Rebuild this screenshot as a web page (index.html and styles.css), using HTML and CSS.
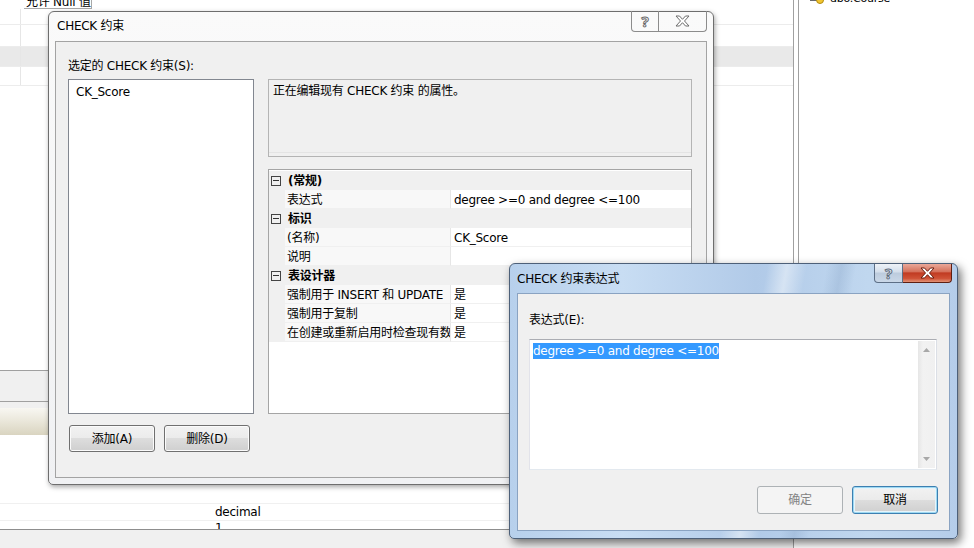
FILE: index.html
```html
<!DOCTYPE html>
<html lang="zh-CN">
<head>
<meta charset="utf-8">
<title>CHECK 约束</title>
<link rel="stylesheet" href="styles.css">
</head>
<body>
<div class="desktop">
  <div class="app">
    <div class="app-main">
      <div class="tbl-head"><span class="tbl-head-cell">允许 Null 值</span></div>
      <div class="tbl-row r1"><span class="tbl-key"></span></div>
      <div class="tbl-row r2"><span class="tbl-key"></span></div>
      <div class="tbl-row r3 sel"><span class="tbl-key"></span></div>
      <div class="tbl-row r4"><span class="tbl-key"></span></div>
      <div class="app-fill"></div>
      <div class="app-tabs"></div>
      <div class="app-toolbar"></div>
      <div class="app-props">
        <div class="prop-line">decimal</div>
        <div class="prop-line cut">1</div>
      </div>
      <div class="app-status"></div>
    </div>
    <div class="app-side">
      <div class="side-inner">
        <div class="side-item">
          <svg class="side-icon" width="14" height="12" viewBox="0 0 14 12"><rect x="0.5" y="0.5" width="9" height="8" fill="#fff" stroke="#6b6b6b"/><circle cx="10" cy="8" r="3.5" fill="#f2c531" stroke="#b08a10"/></svg>
          <span class="side-text">dbo.Course</span>
        </div>
      </div>
    </div>
  </div>

  <div class="win dlg-main">
    <div class="win-title">
      <span class="win-caption">CHECK 约束</span>
      <div class="cap-btns">
        <span class="cap-btn cap-help"><span class="q">?</span></span>
        <span class="cap-btn cap-close"><svg width="15" height="12" viewBox="0 0 15 12"><polygon points="1,1 4.5,1 7.5,4.3 10.5,1 14,1 9.5,6 14,11 10.5,11 7.5,7.7 4.5,11 1,11 5.5,6" fill="#fff" stroke="#6d6d6d" stroke-width="1"/></svg></span>
      </div>
    </div>
    <div class="win-client main-client">
      <div class="list-label">选定的 CHECK 约束(S):</div>
      <div class="listbox"><div class="list-item">CK_Score</div></div>
      <div class="right-col">
        <div class="desc">正在编辑现有 CHECK 约束 的属性。</div>
        <div class="pgrid">
          <div class="pg-cat"><span class="pg-box"></span><b>(常规)</b></div>
          <div class="pg-row"><span class="pg-name">表达式</span><span class="pg-val">degree &gt;=0 and degree &lt;=100</span></div>
          <div class="pg-cat"><span class="pg-box"></span><b>标识</b></div>
          <div class="pg-row"><span class="pg-name">(名称)</span><span class="pg-val">CK_Score</span></div>
          <div class="pg-row"><span class="pg-name">说明</span><span class="pg-val"></span></div>
          <div class="pg-cat"><span class="pg-box"></span><b>表设计器</b></div>
          <div class="pg-row"><span class="pg-name">强制用于 INSERT 和 UPDATE</span><span class="pg-val">是</span></div>
          <div class="pg-row"><span class="pg-name">强制用于复制</span><span class="pg-val">是</span></div>
          <div class="pg-row"><span class="pg-name">在创建或重新启用时检查现有数据</span><span class="pg-val">是</span></div>
        </div>
      </div>
      <div class="btn-row">
        <button class="btn">添加(A)</button>
        <button class="btn">删除(D)</button>
      </div>
    </div>
  </div>

  <div class="win dlg-expr">
    <div class="win-title">
      <span class="win-caption">CHECK 约束表达式</span>
      <div class="cap-btns">
        <span class="cap-btn cap-help"><span class="q">?</span></span>
        <span class="cap-btn cap-close"><svg width="15" height="12" viewBox="0 0 15 12"><polygon points="1,1 4.5,1 7.5,4.3 10.5,1 14,1 9.5,6 14,11 10.5,11 7.5,7.7 4.5,11 1,11 5.5,6" fill="#fff" stroke="#6a1c0e" stroke-width="1"/></svg></span>
      </div>
    </div>
    <div class="win-client expr-client">
      <div class="expr-label">表达式(E):</div>
      <div class="expr-box">
        <div class="expr-text"><span class="sel-text">degree &gt;=0 and degree &lt;=100</span></div>
        <div class="scroll">
          <svg width="7" height="4" viewBox="0 0 7 4"><polygon points="0,4 3.5,0 7,4" fill="#a8a8a8"/></svg>
          <svg width="7" height="4" viewBox="0 0 7 4"><polygon points="0,0 3.5,4 7,0" fill="#a8a8a8"/></svg>
        </div>
      </div>
      <div class="expr-btns">
        <button class="btn btn-disabled">确定</button>
        <button class="btn btn-focus">取消</button>
      </div>
    </div>
  </div>
</div>
</body>
</html>
```

FILE: styles.css
```css
* { box-sizing: border-box; margin: 0; padding: 0; }
html, body { width: 974px; height: 548px; overflow: hidden; }
body {
  background: #fff;
  font-family: "DejaVu Sans", "Noto Sans CJK SC", sans-serif;
  font-size: 12px;
  letter-spacing: -0.25px;
  color: #000;
  line-height: 15px;
}
.desktop { position: relative; width: 974px; height: 548px; overflow: hidden; }

/* background application */
.app { display: flex; height: 548px; }
.app-main { width: 794px; border-right: 1px solid #a0a0a0; display: flex; flex-direction: column; }
.tbl-head { height: 9px; overflow: hidden; display: flex; flex: none; align-items: flex-end; }
.tbl-head-cell {
  margin-left: 24px; width: 68px; height: 9px;
  border-right: 1px solid #a8a8a8; border-bottom: 1px solid #a8a8a8;
  line-height: 12px; padding-left: 2px;
  display: flex; align-items: flex-end; padding-bottom: 0;
}
.tbl-row { display: flex; flex: none; border-bottom: 1px solid #ececec; }
.tbl-row.r1 { height: 16px; }
.tbl-row.r2 { height: 22px; }
.tbl-row.r3 { height: 20px; }
.tbl-row.r4 { height: 19px; }
.tbl-row.sel { background: #e9e9e9; }
.tbl-key { width: 21px; border-right: 1px solid #e6e6e6; }
.app-fill { height: 284px; flex: none; }
.app-tabs { height: 32px; flex: none; border-top: 1px solid #a0a0a0; border-bottom: 1px solid #a0a0a0; background: #f0f0f0; }
.app-toolbar {
  height: 33px; flex: none;
  background: linear-gradient(#f0f0f0 0, #f0f0f0 6px, #f8f7f2 6px, #ebe8dc 55%, #d9d4c0 100%);
}
.app-props { height: 94px; flex: none; padding-top: 68px; }
.prop-line { height: 17px; border-top: 1px solid #f0f0f0; padding-left: 215px; line-height: 16px; overflow: hidden; }
.prop-line.cut { height: 9px; line-height: 14px; }
.app-status { flex: 1; border-top: 1px solid #8e8e8e; background: #f0f0f0; }

.app-side { flex: 1; padding-left: 4px; }
.side-inner { height: 100%; border-left: 1px solid #a0a0a0; }
.side-item { display: flex; align-items: center; gap: 6px; height: 14px; margin-top: -9px; padding-left: 11px; }
.side-text { font-size: 11px; }

/* windows */
.win { position: absolute; display: flex; flex-direction: column; border: 1px solid; border-radius: 6px 6px 5px 5px; }
.win-title { height: 29px; flex: none; display: flex; align-items: center; position: relative; }
.win-client { flex: 1; border: 1px solid; background: #f0f0f0; }

.dlg-main {
  left: 48px; top: 11px; width: 666px; height: 474px;
  border-color: #6e6e6e;
  background: linear-gradient(#fafafa, #f0f1f3);
  box-shadow: 1px 2px 5px rgba(0,0,0,.35);
}
.dlg-main .win-title { padding-left: 8px; }
.dlg-main .win-client { margin: 0 6px 6px; border-color: #a3a3a3; }

.dlg-expr {
  left: 509px; top: 263px; width: 449px; height: 276px;
  border-color: #4d6079;
  background:
    linear-gradient(100deg, rgba(255,255,255,0) 52%, rgba(255,255,255,.45) 56%, rgba(255,255,255,0) 60%, rgba(255,255,255,0) 64%, rgba(110,140,180,.22) 67%, rgba(255,255,255,0) 70%),
    linear-gradient(90deg, #b7d0ec, #c8ddf3 25%, #b1cae8 55%, #c0d7ef 80%, #b5cdea);
  box-shadow: 3px 4px 10px rgba(0,0,0,.55);
}
.dlg-expr .win-title { padding-left: 7px; padding-top: 2px; }
.dlg-expr .win-client { margin: 0 7px 7px; border-color: #8aa3c2; }

.cap-btns { position: absolute; top: -1px; right: 6px; display: flex; height: 21px; }
.cap-btn { display: flex; align-items: center; justify-content: center; border: 1px solid #8c8c8c; border-top: none; }
.cap-help { width: 28px; border-radius: 0 0 0 4px; }
.cap-close { width: 48px; border-left: none; border-radius: 0 0 4px 0; }
.q { font-family: "Noto Sans", sans-serif; font-size: 15px; font-weight: 700; color: #fff; -webkit-text-stroke: 1px #6a6a6a; line-height: 15px; }

.dlg-expr .cap-btns { top: 0; right: 5px; height: 19px; }
.dlg-expr .cap-help {
  width: 29px; border-color: #5d6f86;
  background: linear-gradient(#eef2f7, #d3deeb 45%, #bccbdd 50%, #cad8e8);
}
.dlg-expr .cap-close {
  width: 49px; border-color: #5e1f12;
  background: linear-gradient(#eaa899, #d5725c 42%, #c13b22 50%, #cf5236 80%, #e29276);
}
.dlg-expr .q { -webkit-text-stroke: 1px #5f6c7d; color: #eef2f7; }

/* main dialog client */
.main-client {
  display: grid;
  grid-template-columns: 186px 424px;
  grid-template-rows: 21px 335px auto;
  column-gap: 14px;
  padding: 16px 0 0 12px;
}
.list-label { grid-column: 1; grid-row: 1; padding-top: 1px; }
.listbox { grid-column: 1; grid-row: 2; background: #fff; border: 1px solid #828790; padding: 5px 7px; }
.right-col { grid-column: 2; grid-row: 2; display: flex; flex-direction: column; gap: 12px; }
.desc {
  height: 78px; flex: none;
  border: 1px solid #b4b4b4; background: #f0f0f0;
  padding: 4px 4px;
  box-shadow: inset 0 -3px 0 #f0f0f0, inset 0 -4px 0 #e4e4e4;
}
.pgrid { flex: 1; border: 1px solid #a5a5a5; background: #fff; padding-top: 1px; }
.pg-cat { height: 19px; display: flex; align-items: center; background: #f0f0f0; padding-left: 2px; }
.pg-cat b { font-weight: 700; line-height: 20px; }
.pg-box { width: 10px; height: 10px; border: 1px solid #444; position: relative; margin-right: 7px; }
.pg-box::after { content: ""; position: absolute; left: 1px; right: 1px; top: 3px; height: 1px; background: #333; }
.pg-row { display: grid; grid-template-columns: 182px 1fr; height: 19px; }
.pg-name {
  padding-left: 18px; white-space: nowrap; overflow: hidden;
  background: linear-gradient(90deg, #f0f0f0 16px, #f8f8f8 16px);
  border-bottom: 1px solid #f0f0f0; border-right: 1px solid #e6e6e6;
  line-height: 20px;
}
.pg-val { padding-left: 3px; white-space: nowrap; overflow: hidden; background: #fff; border-bottom: 1px solid #f0f0f0; line-height: 20px; }

.btn-row { grid-column: 1 / 3; grid-row: 3; display: flex; gap: 9px; margin: 11px 0 0 1px; }
.btn {
  font: inherit; color: #000; letter-spacing: inherit;
  width: 86px; height: 27px; padding-top: 1px;
  border: 1px solid #707070; border-radius: 3px;
  background: linear-gradient(#f2f2f2 0, #ebebeb 50%, #dddddd 50%, #cfcfcf 100%);
  box-shadow: inset 0 0 0 1px #fbfbfb;
}

/* expression dialog client */
.expr-client { padding: 17px 12px 0 11px; display: flex; flex-direction: column; }
.expr-label { height: 28px; padding-top: 2px; }
.expr-box {
  height: 131px; flex: none; display: flex;
  border: 1px solid; border-color: #abadb3 #dbdfe6 #e3e9ef #e2e3ea;
  background: #fff;
}
.expr-text { flex: 1; padding: 3px 0 0 3px; }
.sel-text { background: #3399ff; color: #fff; display: inline-block; line-height: 15px; padding-top: 1px; }
.scroll {
  width: 17px; margin: 1px 1px 1px 0;
  background: linear-gradient(90deg, #e6e6e6, #f2f2f2 30%, #f0f0f0);
  display: flex; flex-direction: column; justify-content: space-between; align-items: center;
  padding: 7px 0 7px;
}
.expr-btns { display: flex; justify-content: flex-end; gap: 9px; margin-top: 16px; margin-right: -1px; }
.expr-btns .btn { height: 28px; }
.btn-disabled { border-color: #adb2b5; background: #f4f4f4; color: #838383; box-shadow: none; }
.btn-focus { border-color: #3c7fb1; box-shadow: inset 0 0 0 1px #9ed9f2, inset 0 0 0 2px #e6f4fb; }
```
